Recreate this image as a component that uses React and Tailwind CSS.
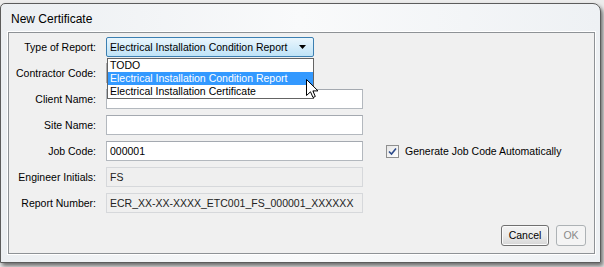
const rows = [
  { label: "Contractor Code:", value: "", kind: "combo" },
  { label: "Client Name:", value: "", kind: "text" },
  { label: "Site Name:", value: "", kind: "text" },
  { label: "Job Code:", value: "000001", kind: "text", check: true },
  { label: "Engineer Initials:", value: "FS", kind: "disabled" },
  { label: "Report Number:", value: "ECR_XX-XX-XXXX_ETC001_FS_000001_XXXXXX", kind: "disabled" },
];

const options = [
  "TODO",
  "Electrical Installation Condition Report",
  "Electrical Installation Certificate",
];

const fieldClass = {
  combo: "w-[206px] h-[20px] border border-[#acacac] bg-[#f0f0f0]",
  text: "w-[257px] h-[20px] border border-[#b3b8be] border-t-[#a4a9b0] bg-white flex items-center pl-[3px]",
  disabled: "w-[257px] h-[20px] border border-[#d6d8db] bg-[#efefef] flex items-center pl-[3px] text-[#222]",
};

const Cursor = () => (
  <svg width="13" height="20" viewBox="0 0 13 20" className="absolute left-[297px] top-[46px]">
    <path
      d="M0.5 0.5 L0.5 16.5 L4.5 12.8 L7 18.5 L9.3 17.5 L6.9 11.9 L12 11.9 Z"
      fill="#fff"
      stroke="#000"
      strokeWidth="1"
      strokeLinejoin="round"
    />
  </svg>
);

const Row = ({ label, children }) => (
  <div className="flex items-center h-[20px]">
    <div className="w-[88px] text-right pr-[1px] text-black">{label}</div>
    <div className="ml-[9px] flex items-center">{children}</div>
  </div>
);

export default function App() {
  return (
    <div
      className="w-[604px] h-[267px] overflow-hidden bg-[#ececec] text-[10.5px] leading-[13px]"
      style={{ fontFamily: '"Liberation Sans", Arial, sans-serif' }}
    >
      <div className="mt-[3px] w-[601px] h-[260px] rounded-tl-[5px] rounded-tr-[8px] border border-[#5c5c5c] bg-gradient-to-r from-[#eceff2] via-[#f9fafb] to-[#eef1f4] shadow-[2px_3px_4px_rgba(0,0,0,0.55)] flex flex-col pl-[7px] pr-[5px] pb-[8px]">
        <div className="h-[28px] pt-[8px] pl-[3px] text-[12px] leading-[14px] text-black">New Certificate</div>
        <div className="relative flex-1 border border-[#8e9296] bg-[#f0f0f0] shadow-[0_0_0_1px_#ffffff] flex flex-col pt-[4px] pb-[7px] pr-[8px]">
          <div className="flex flex-col gap-[6px]">
            <Row label="Type of Report:">
              <div className="w-[208px] h-[20px] rounded-[2px] border border-[#3c7fb1] bg-gradient-to-b from-[#eaf6fd] to-[#bfe3f7] flex items-center justify-between pl-[3px] pr-[7px]">
                <span>Electrical Installation Condition Report</span>
                <svg width="7" height="4" viewBox="0 0 7 4">
                  <path d="M0 0 H7 L3.5 4 Z" fill="#000" />
                </svg>
              </div>
            </Row>
            {rows.map((r) => (
              <Row key={r.label} label={r.label}>
                <div className={fieldClass[r.kind]}>{r.value}</div>
                {r.check && (
                  <div className="ml-[23px] flex items-center">
                    <div className="w-[13px] h-[13px] border border-[#8f8f8f] bg-gradient-to-br from-[#e6e6e6] to-[#ffffff] flex items-center justify-center">
                      <svg width="9" height="9" viewBox="0 0 9 9">
                        <path d="M1 4.5 L3.5 7 L8 1.5" fill="none" stroke="#2c4a8a" strokeWidth="1.6" />
                      </svg>
                    </div>
                    <span className="ml-[6px]">Generate Job Code Automatically</span>
                  </div>
                )}
              </Row>
            ))}
          </div>
          <div className="mt-auto flex justify-end gap-[7px]">
            <div className="w-[48px] h-[21px] rounded-[3px] border border-[#707070] bg-gradient-to-b from-[#f2f2f2] via-[#ebebeb] to-[#d6d6d6] flex items-center justify-center shadow-[inset_0_0_0_1px_#fbfbfb]">
              Cancel
            </div>
            <div className="w-[30px] h-[21px] rounded-[3px] border border-[#adb2b5] bg-[#f4f4f4] text-[#8a8a8a] flex items-center justify-center">
              OK
            </div>
          </div>

          <div className="absolute left-[98px] top-[25px] w-[207px] border border-[#646464] bg-white">
            {options.map((o, i) => (
              <div
                key={o}
                className={
                  i === 1
                    ? "h-[13px] pl-[2px] bg-[#3399ff] text-white"
                    : "h-[13px] pl-[2px] text-black"
                }
              >
                {o}
              </div>
            ))}
          </div>
          <Cursor />
        </div>
      </div>
    </div>
  );
}
